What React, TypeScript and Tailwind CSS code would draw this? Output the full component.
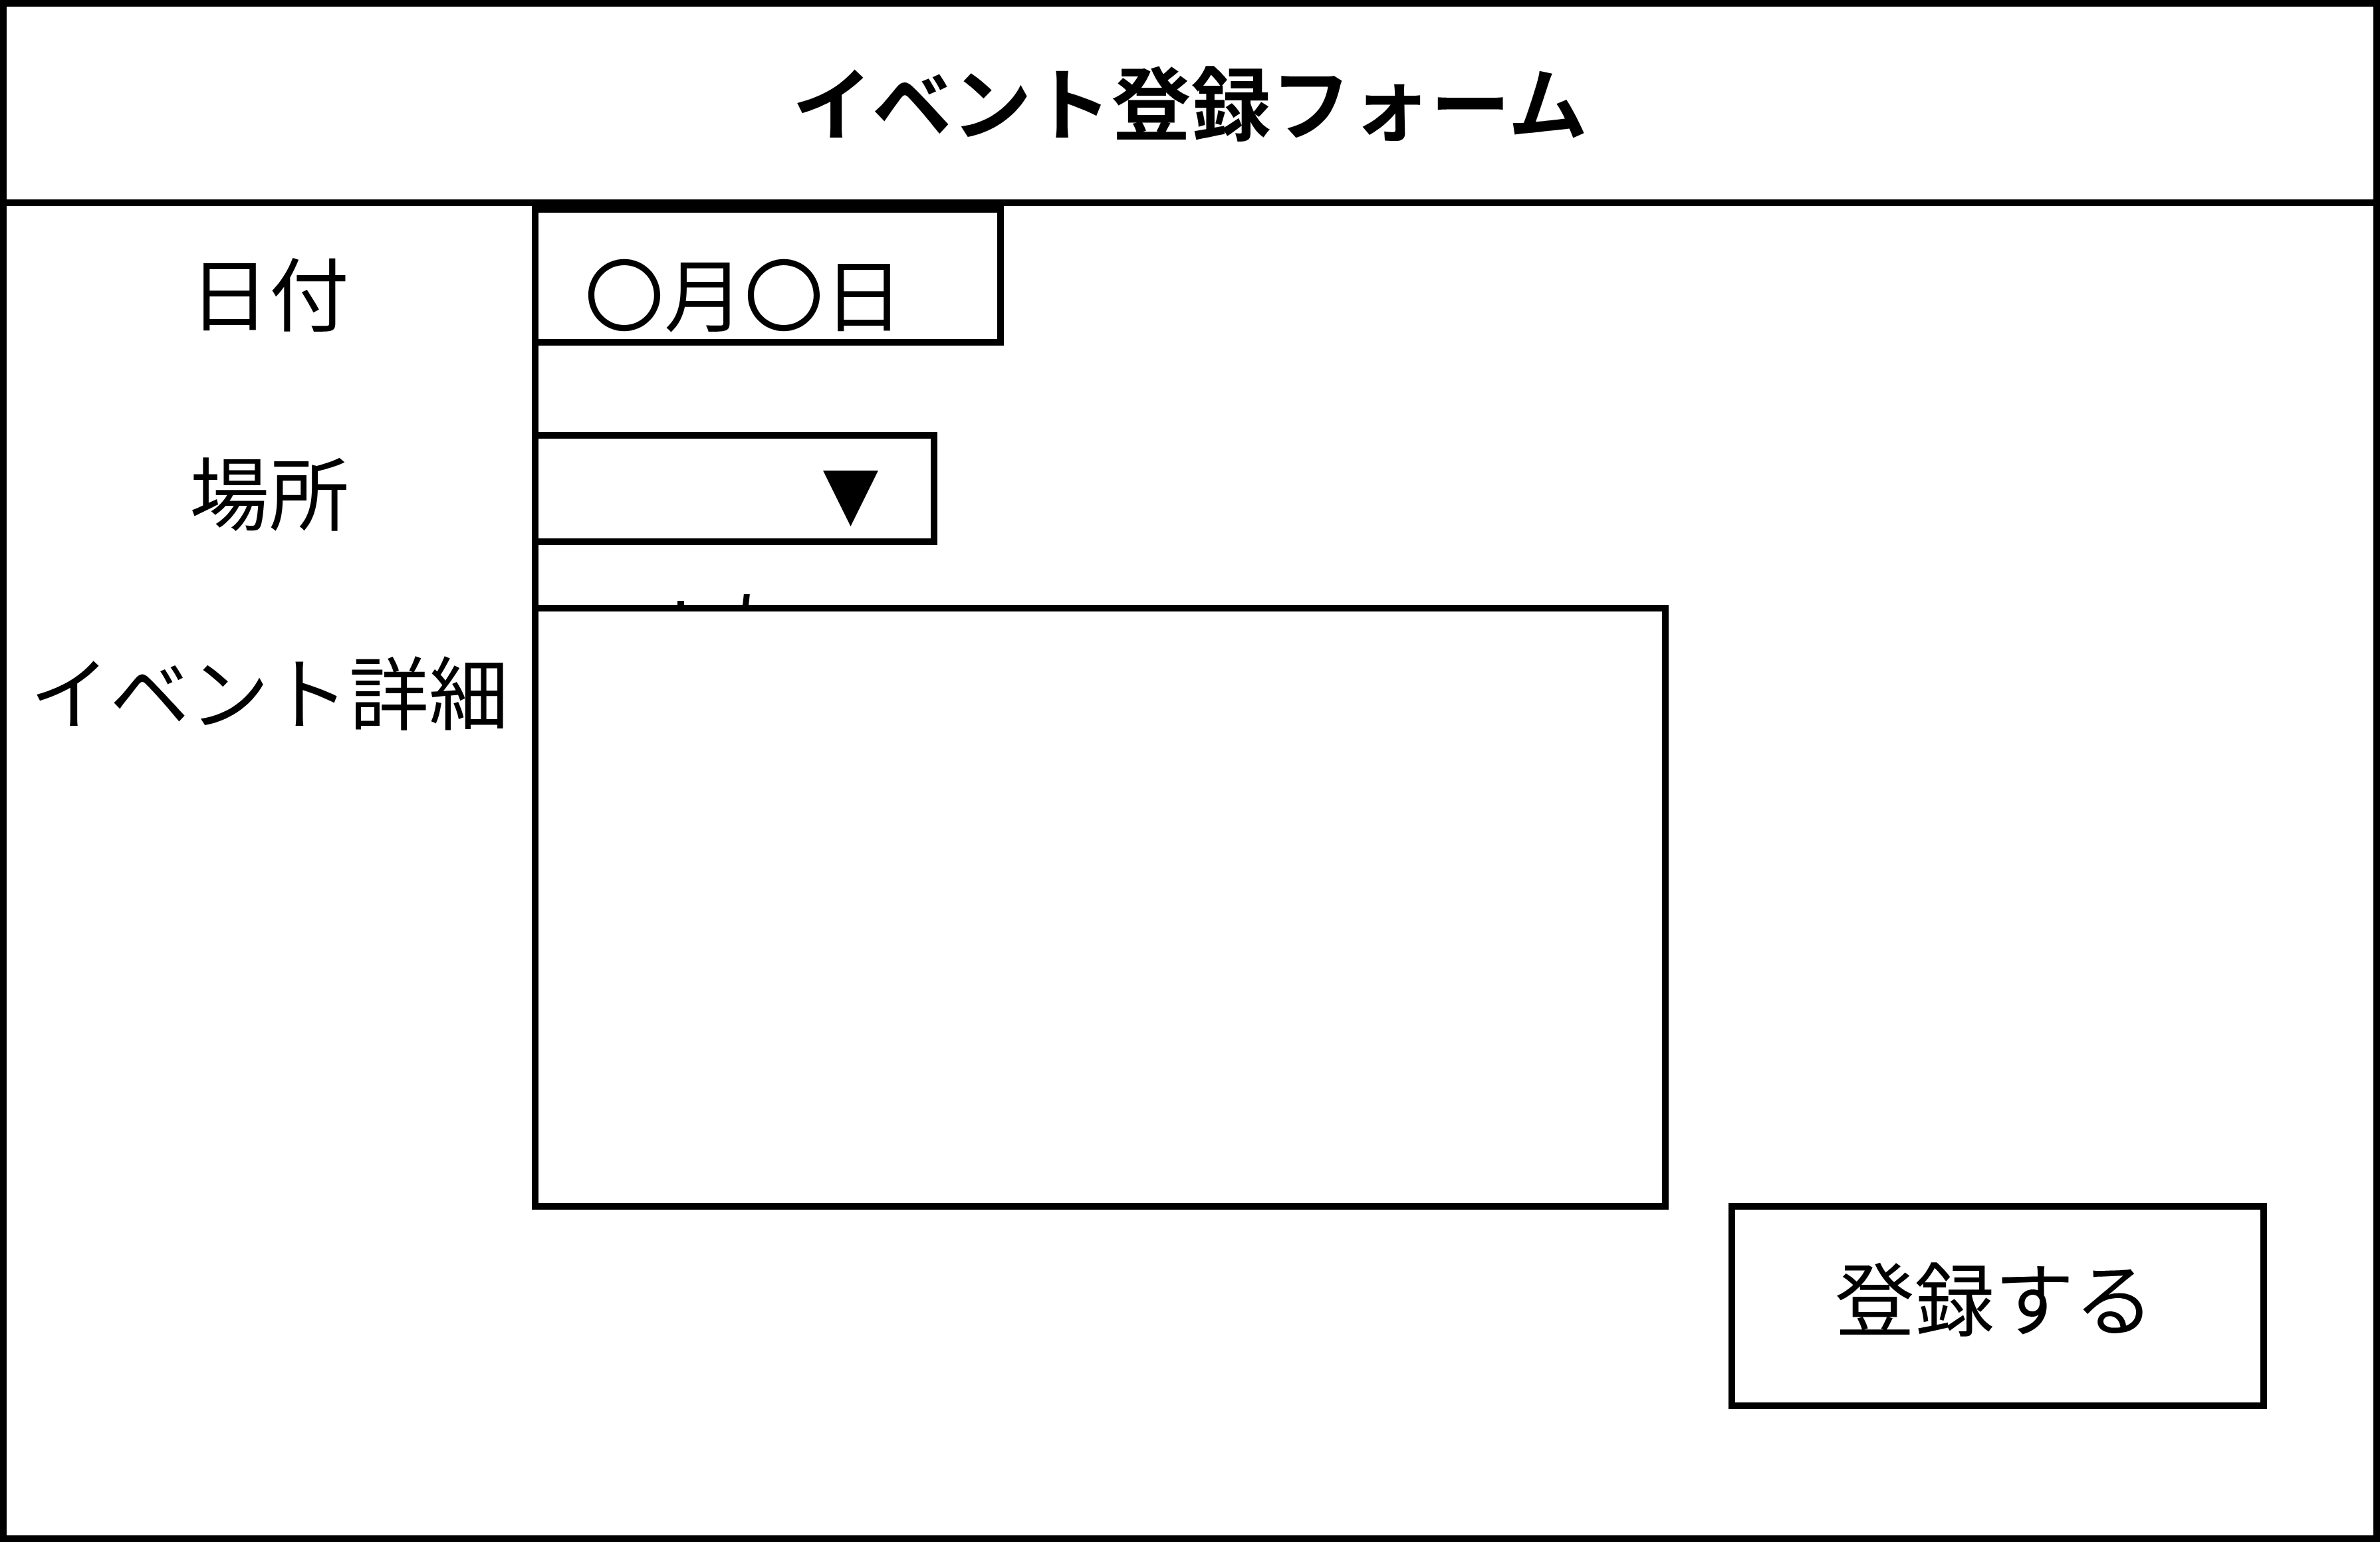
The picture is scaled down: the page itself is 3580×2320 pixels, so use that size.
import React from "react";

export default function App() {
  return (
    <div
      className="w-[3580px] h-[2320px] bg-white text-black border-[10px] border-black flex flex-col overflow-hidden"
      style={{ fontFamily: '"Noto Sans CJK JP", "Noto Sans", sans-serif' }}
    >
      {/* Header */}
      <div className="h-[300px] shrink-0 border-b-[10px] border-black flex justify-center pt-[80px]">
        <h1 className="text-[120px] font-bold leading-none tracking-normal">イベント登録フォーム</h1>
      </div>

      {/* Body */}
      <div className="flex-1 flex flex-row items-start">
        {/* Labels */}
        <div className="w-[790px] shrink-0 flex flex-col items-center pt-[67px] gap-[180px] text-[120px] leading-none">
          <span>日付</span>
          <span>場所</span>
          <span>イベント詳細</span>
        </div>

        {/* Fields column */}
        <div className="w-[1710px] shrink-0 flex flex-col border-l-[10px] border-black">
          {/* Date */}
          <div className="w-[700px] h-[210px] border-t-[10px] border-r-[10px] border-b-[10px] border-black pl-[69px] pt-[58px]">
            <span className="text-[120px] leading-none">〇月〇日</span>
          </div>
          <div className="h-[130px]" />
          {/* Place select */}
          <div className="w-[600px] h-[170px] border-t-[10px] border-r-[10px] border-b-[10px] border-black flex justify-end items-start pr-[79px] pt-[48px]">
            <svg width="83" height="84" viewBox="0 0 83 84">
              <polygon points="0,0 83,0 41.5,84" fill="#000" />
            </svg>
          </div>
          {/* Gap with clipped marks */}
          <div className="h-[90px] flex flex-row items-end pl-[209px] gap-[89px]">
            <div className="w-[10px] h-[6px] bg-black" />
            <div className="w-[9px] h-[16px] bg-black -skew-x-6" />
          </div>
          {/* Details textarea */}
          <div className="w-[1700px] h-[910px] border-t-[10px] border-r-[10px] border-b-[10px] border-black" />
        </div>

        {/* Submit button */}
        <div className="ml-[90px] mt-[1500px] w-[810px] h-[310px] shrink-0 border-[10px] border-black flex justify-center items-start pt-[69px] pr-[10px]">
          <span className="text-[120px] leading-none">登録する</span>
        </div>
      </div>
    </div>
  );
}
